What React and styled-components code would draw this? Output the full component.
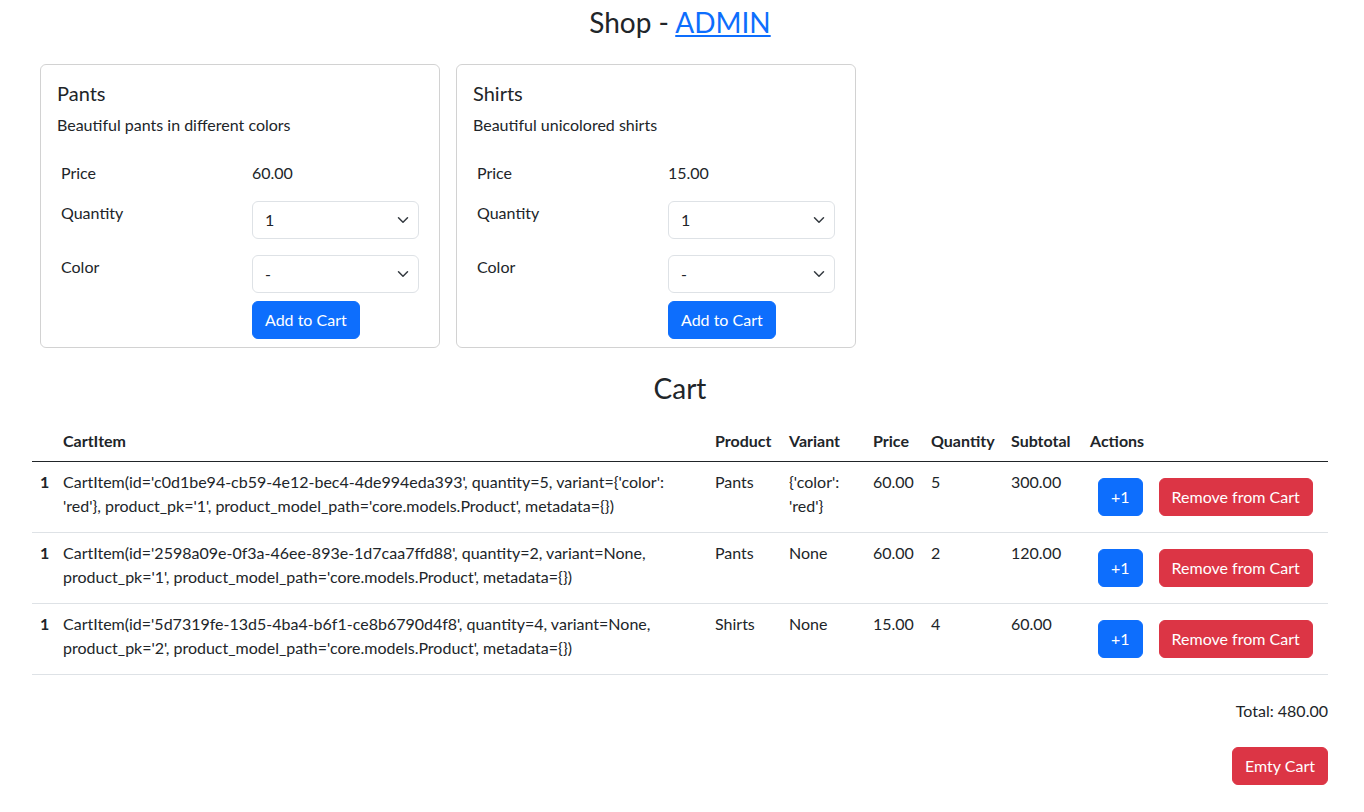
import React from 'react'
import styled, { createGlobalStyle } from 'styled-components'

const GlobalStyle = createGlobalStyle`
  * { box-sizing: border-box; }
  body {
    margin: 0;
    font-family: Lato, "Liberation Sans", sans-serif;
    font-size: 16px;
    line-height: 1.5;
    color: #212529;
    background: #fff;
  }
`

const Page = styled.div`
  width: 1296px;
  margin-left: 32px;
`

const Heading = styled.h3`
  font-size: 28px;
  font-weight: 400;
  line-height: 1.2;
  text-align: center;
  margin: ${p => p.$cart ? '16px 0 16px' : '6px 0 16px'};

  a {
    color: #0d6efd;
    text-decoration: underline;
  }
`

const CardRow = styled.div`
  display: flex;
`

const Card = styled.div`
  width: 400px;
  margin: 8px;
  border: 1px solid rgba(0, 0, 0, 0.175);
  border-radius: 6px;
  padding: 16px 16px 0;
`

const CardTitle = styled.h5`
  font-size: 20px;
  font-weight: 400;
  line-height: 1.2;
  margin: 0 0 8px;
`

const CardText = styled.p`
  margin: 0 0 16px;
`

const OptionRow = styled.div`
  display: grid;
  grid-template-columns: 191px 175px;
`

const OptionCell = styled.div`
  padding: 8px 4px;
  display: flex;
  flex-direction: column;
  align-items: flex-start;
  gap: 8px;
`

const SelectWrap = styled.div`
  position: relative;
  width: 100%;

  svg {
    position: absolute;
    right: 10px;
    top: 13px;
    pointer-events: none;
  }
`

const Select = styled.select`
  appearance: none;
  display: block;
  width: 100%;
  height: 38px;
  padding: 6px 36px 6px 12px;
  font: inherit;
  color: #212529;
  background: #fff;
  border: 1px solid #dee2e6;
  border-radius: 6px;
`

const Button = styled.button`
  font: inherit;
  line-height: 24px;
  padding: 6px 12px;
  color: #fff;
  background: ${p => p.$danger ? '#dc3545' : '#0d6efd'};
  border: 1px solid ${p => p.$danger ? '#dc3545' : '#0d6efd'};
  border-radius: 6px;
  cursor: pointer;
  white-space: nowrap;
`

const Table = styled.table`
  width: 1296px;
  table-layout: fixed;
  border-collapse: collapse;
  margin-bottom: 24px;
`

const Th = styled.th`
  text-align: left;
  font-weight: 700;
  padding: 8px;
  border-bottom: 1px solid #212529;
  vertical-align: bottom;
`

const Td = styled.td`
  padding: 8px;
  vertical-align: top;
  border-bottom: 1px solid #dee2e6;
  font-weight: ${p => p.$bold ? 700 : 400};
  word-wrap: break-word;
`

const ActionCell = styled.td`
  padding: 16px;
  vertical-align: middle;
  border-bottom: 1px solid #dee2e6;
`

const Actions = styled.div`
  display: flex;
  gap: 16px;
`

const Footer = styled.div`
  display: flex;
  flex-direction: column;
  align-items: flex-end;
  gap: 24px;
`

const Total = styled.div`
  line-height: 24px;
`

function Chevron() {
  return (
    <svg width="12" height="12" viewBox="0 0 16 16" fill="none">
      <path d="m2 5 6 6 6-6" stroke="#343a40" strokeWidth="2" strokeLinecap="round" strokeLinejoin="round" />
    </svg>
  )
}

function Dropdown({ value, options }) {
  return (
    <SelectWrap>
      <Select defaultValue={value}>
        {options.map(o => <option key={o} value={o}>{o}</option>)}
      </Select>
      <Chevron />
    </SelectWrap>
  )
}

const products = [
  { name: 'Pants', desc: 'Beautiful pants in different colors', price: '60.00' },
  { name: 'Shirts', desc: 'Beautiful unicolored shirts', price: '15.00' },
]

const items = [
  {
    text: "CartItem(id='c0d1be94-cb59-4e12-bec4-4de994eda393', quantity=5, variant={'color': 'red'}, product_pk='1', product_model_path='core.models.Product', metadata={})",
    product: 'Pants', variant: "{'color': 'red'}", price: '60.00', qty: '5', subtotal: '300.00',
  },
  {
    text: "CartItem(id='2598a09e-0f3a-46ee-893e-1d7caa7ffd88', quantity=2, variant=None, product_pk='1', product_model_path='core.models.Product', metadata={})",
    product: 'Pants', variant: 'None', price: '60.00', qty: '2', subtotal: '120.00',
  },
  {
    text: "CartItem(id='5d7319fe-13d5-4ba4-b6f1-ce8b6790d4f8', quantity=4, variant=None, product_pk='2', product_model_path='core.models.Product', metadata={})",
    product: 'Shirts', variant: 'None', price: '15.00', qty: '4', subtotal: '60.00',
  },
]

const widths = [23, 652, 74, 84, 58, 80, 79, 246]

export default function App() {
  return (
    <>
      <GlobalStyle />
      <Page>
        <Heading>Shop - <a href="#admin">ADMIN</a></Heading>
        <CardRow>
          {products.map(p => (
            <Card key={p.name}>
              <CardTitle>{p.name}</CardTitle>
              <CardText>{p.desc}</CardText>
              <OptionRow>
                <OptionCell>Price</OptionCell>
                <OptionCell>{p.price}</OptionCell>
              </OptionRow>
              <OptionRow>
                <OptionCell>Quantity</OptionCell>
                <OptionCell>
                  <Dropdown value="1" options={['1', '2', '3', '4', '5']} />
                </OptionCell>
              </OptionRow>
              <OptionRow>
                <OptionCell>Color</OptionCell>
                <OptionCell>
                  <Dropdown value="-" options={['-', 'red', 'blue']} />
                  <Button>Add to Cart</Button>
                </OptionCell>
              </OptionRow>
            </Card>
          ))}
        </CardRow>

        <Heading $cart>Cart</Heading>
        <Table>
          <colgroup>
            {widths.map((w, i) => <col key={i} style={{ width: w }} />)}
          </colgroup>
          <thead>
            <tr>
              <Th></Th>
              <Th>CartItem</Th>
              <Th>Product</Th>
              <Th>Variant</Th>
              <Th>Price</Th>
              <Th>Quantity</Th>
              <Th>Subtotal</Th>
              <Th>Actions</Th>
            </tr>
          </thead>
          <tbody>
            {items.map(it => (
              <tr key={it.text}>
                <Td $bold>1</Td>
                <Td>{it.text}</Td>
                <Td>{it.product}</Td>
                <Td>{it.variant}</Td>
                <Td>{it.price}</Td>
                <Td>{it.qty}</Td>
                <Td>{it.subtotal}</Td>
                <ActionCell>
                  <Actions>
                    <Button>+1</Button>
                    <Button $danger>Remove from Cart</Button>
                  </Actions>
                </ActionCell>
              </tr>
            ))}
          </tbody>
        </Table>
        <Footer>
          <Total>Total: 480.00</Total>
          <Button $danger>Emty Cart</Button>
        </Footer>
      </Page>
    </>
  )
}
